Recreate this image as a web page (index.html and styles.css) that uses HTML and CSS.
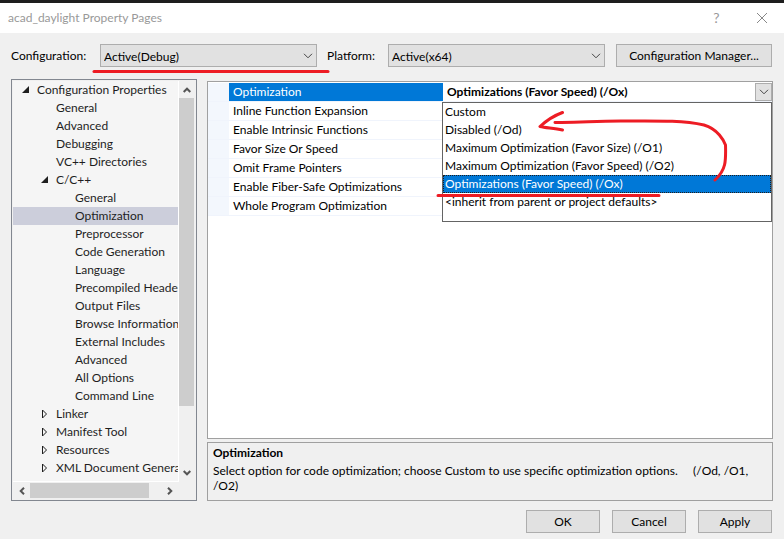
FILE: index.html
```html
<!DOCTYPE html>
<html lang="en">
<head>
<meta charset="utf-8">
<title>acad_daylight Property Pages</title>
<link rel="stylesheet" href="styles.css">
</head>
<body>
<header class="titlebar">
  <h1 class="title">acad_daylight Property Pages</h1>
  <button class="caption-button" type="button" aria-label="Help">?</button>
  <button class="caption-button" type="button" aria-label="Close"><svg width="10" height="10" viewBox="0 0 10 10"><path d="M0 0L10 10M10 0L0 10"/></svg></button>
</header>

<div class="config-row">
  <label class="config-label" for="configuration">Configuration:</label>
  <div class="combo">
    <select id="configuration"><option>Active(Debug)</option></select>
    <svg class="chevron" width="10" height="6" viewBox="0 0 10 6"><path d="M1 .8L5 4.8L9 .8"/></svg>
    <svg class="mark mark-config" width="240" height="6" viewBox="0 0 240 6"><path d="M3 3.500H237"/></svg>
  </div>
  <label class="platform-label" for="platform">Platform:</label>
  <div class="combo">
    <select id="platform"><option>Active(x64)</option></select>
    <svg class="chevron" width="10" height="6" viewBox="0 0 10 6"><path d="M1 .8L5 4.8L9 .8"/></svg>
  </div>
  <button class="button manager" type="button">Configuration Manager...</button>
</div>

<main class="main">
  <nav class="tree" aria-label="Property pages">
    <div class="tree-view">
      <ul>
        <li><a class="open" href="#"><svg width="8" height="8" viewBox="0 0 8 8"><path class="solid" d="M7 0V7H0Z"/></svg>Configuration Properties</a>
          <ul>
            <li><a href="#">General</a></li>
            <li><a href="#">Advanced</a></li>
            <li><a href="#">Debugging</a></li>
            <li><a href="#">VC++ Directories</a></li>
            <li><a class="open" href="#"><svg width="8" height="8" viewBox="0 0 8 8"><path class="solid" d="M7 0V7H0Z"/></svg>C/C++</a>
              <ul>
                <li><a href="#">General</a></li>
                <li><a class="selected" href="#" aria-current="page">Optimization</a></li>
                <li><a href="#">Preprocessor</a></li>
                <li><a href="#">Code Generation</a></li>
                <li><a href="#">Language</a></li>
                <li><a href="#">Precompiled Headers</a></li>
                <li><a href="#">Output Files</a></li>
                <li><a href="#">Browse Information</a></li>
                <li><a href="#">External Includes</a></li>
                <li><a href="#">Advanced</a></li>
                <li><a href="#">All Options</a></li>
                <li><a href="#">Command Line</a></li>
              </ul>
            </li>
            <li><a class="closed" href="#"><svg width="8" height="10" viewBox="0 0 8 10"><path class="hollow" d="M1.5 1V9L5.5 5Z"/></svg>Linker</a></li>
            <li><a class="closed" href="#"><svg width="8" height="10" viewBox="0 0 8 10"><path class="hollow" d="M1.5 1V9L5.5 5Z"/></svg>Manifest Tool</a></li>
            <li><a class="closed" href="#"><svg width="8" height="10" viewBox="0 0 8 10"><path class="hollow" d="M1.5 1V9L5.5 5Z"/></svg>Resources</a></li>
            <li><a class="closed" href="#"><svg width="8" height="10" viewBox="0 0 8 10"><path class="hollow" d="M1.5 1V9L5.5 5Z"/></svg>XML Document Generator</a></li>
          </ul>
        </li>
      </ul>
    </div>
    <div class="scroll-v">
      <svg class="arrow" width="8" height="6" viewBox="0 0 8 6"><path d="M.7 5L4 1.7L7.300 5"/></svg>
      <div class="track"><div class="thumb"></div></div>
      <svg class="arrow" width="8" height="6" viewBox="0 0 8 6"><path d="M.7 1L4 4.300L7.300 1"/></svg>
    </div>
    <div class="scroll-h">
      <svg class="arrow" width="6" height="8" viewBox="0 0 6 8"><path d="M5 .7L1.700 4L5 7.300"/></svg>
      <div class="track"><div class="thumb"></div></div>
      <svg class="arrow" width="6" height="8" viewBox="0 0 6 8"><path d="M1 .7L4.300 4L1 7.300"/></svg>
    </div>
  </nav>

  <div class="content">
    <section class="grid">
      <table>
        <tbody>
          <tr class="active"><td class="gutter"></td><th scope="row"><label for="optimization">Optimization</label></th>
            <td class="value">
              <div class="editor">
                <select id="optimization"><option>Optimizations (Favor Speed) (/Ox)</option></select>
                <span class="drop"><svg width="10" height="6" viewBox="0 0 10 6"><path d="M1 .8L5 4.8L9 .8"/></svg></span>
                <div class="menu">
                  <ul role="listbox" aria-label="Optimization">
                    <li role="option">Custom</li>
                    <li role="option">Disabled (/Od)</li>
                    <li role="option">Maximum Optimization (Favor Size) (/O1)</li>
                    <li role="option">Maximum Optimization (Favor Speed) (/O2)</li>
                    <li role="option" class="chosen" aria-selected="true">Optimizations (Favor Speed) (/Ox)</li>
                    <li role="option">&lt;inherit from parent or project defaults&gt;</li>
                  </ul>
                  <svg class="mark mark-menu" width="300" height="110" viewBox="0 0 300 110"><path d="M7 98.500H228M131.500 15.500C122 19 115 24 109 29.500C115 31 123 31 131.500 33M124 25.500C150 26 160 24 190 24C223 24 250 23 273 28C287 32 293 44 294.500 48C295 64 295 73 284 83"/></svg>
                </div>
              </div>
            </td></tr>
          <tr><td class="gutter"></td><th scope="row">Inline Function Expansion</th><td></td></tr>
          <tr><td class="gutter"></td><th scope="row">Enable Intrinsic Functions</th><td></td></tr>
          <tr><td class="gutter"></td><th scope="row">Favor Size Or Speed</th><td></td></tr>
          <tr><td class="gutter"></td><th scope="row">Omit Frame Pointers</th><td></td></tr>
          <tr><td class="gutter"></td><th scope="row">Enable Fiber-Safe Optimizations</th><td></td></tr>
          <tr><td class="gutter"></td><th scope="row">Whole Program Optimization</th><td></td></tr>
        </tbody>
      </table>
    </section>
    <section class="description">
      <h2>Optimization</h2>
      <p>Select option for code optimization; choose Custom to use specific optimization options. &nbsp;&nbsp;&nbsp; (/Od, /O1, /O2)</p>
    </section>
  </div>
</main>

<footer class="actions">
  <button class="button" type="button">OK</button>
  <button class="button" type="button">Cancel</button>
  <button class="button" type="button">Apply</button>
</footer>
</body>
</html>
```
FILE: styles.css
```css
* { box-sizing: border-box; }

body {
  margin: 0;
  min-height: 100vh;
  display: flex;
  flex-direction: column;
  background: #f0f0f0;
  border-top: 3px solid #1e1e1e;
  color: #000;
  font-family: Lato, "Noto Sans", sans-serif;
  font-size: 12px;
  line-height: 18px;
}

button, select { font: inherit; color: inherit; }
ul { list-style: none; margin: 0; padding: 0; }
svg { display: block; fill: none; stroke: #444; }

.titlebar {
  display: flex;
  align-items: center;
  height: 30px;
  padding-left: 8px;
  background: #fff;
  color: #999;
}
.title { flex: 1; margin: 0; font-size: 12px; font-weight: 400; }
.caption-button {
  display: flex;
  align-items: center;
  justify-content: center;
  width: 45px;
  height: 28px;
  padding: 0;
  border: 0;
  background: none;
  font-size: 14px;
}
.caption-button svg { stroke: #888; }

.config-row {
  display: flex;
  align-items: center;
  padding: 11px 12px 0 11px;
}
.config-label { width: 89px; }
.platform-label { width: 61px; }
.combo + .platform-label { margin-left: 10px; }
.combo { position: relative; flex: 1; }
.combo select {
  display: block;
  appearance: none;
  width: 100%;
  height: 23px;
  padding: 2px 3px 0;
  border: 1px solid #adadad;
  border-radius: 0;
  background: #e1e1e1;
}
.chevron { position: absolute; right: 4px; top: 9px; }
.button {
  width: 74px;
  height: 23px;
  padding: 0;
  border: 1px solid #adadad;
  background: #e1e1e1;
}
.manager { width: 156px; margin-left: 11px; }

.main {
  flex: 1;
  display: flex;
  gap: 10px;
  padding: 12px 11px 0 11px;
}

.tree {
  display: grid;
  grid-template-columns: minmax(0, 1fr) 16px;
  grid-template-rows: 1fr 17px;
  width: 186px;
  padding: 1px;
  border: 1px solid #828790;
}
.tree-view {
  overflow: hidden;
  background: #f5f5f5;
  border-right: 1px solid #fff;
  border-bottom: 1px solid #fff;
  color: #1e1e1e;
}
.tree a {
  display: flex;
  align-items: center;
  height: 18px;
  padding-left: 24px;
  color: inherit;
  text-decoration: none;
  white-space: nowrap;
}
.tree li li a { padding-left: 43px; }
.tree li li li a { padding-left: 62px; }
.tree a.open, .tree a.closed { padding-left: 9px; }
.tree li li a.open, .tree li li a.closed { padding-left: 28px; }
.tree a svg { flex: none; margin-right: 7px; }
.tree .selected { background: #cccedb; }
.solid { fill: #1e1e1e; stroke: none; }
.hollow { stroke: #1e1e1e; }

.scroll-v, .scroll-h { display: flex; align-items: center; }
.scroll-v { flex-direction: column; padding: 6px 1px 6px 0; }
.scroll-h { padding: 0 6px; }
.scroll-v .track { flex: 1; width: 15px; margin: 5px 0; }
.scroll-h .track { flex: 1; height: 15px; margin: 0 5px; }
.scroll-v .thumb { height: 84%; background: #cdcdcd; }
.scroll-h .thumb { width: 90%; height: 100%; background: #cdcdcd; }
.arrow { stroke: #555; stroke-width: 2; }

.content {
  flex: 1;
  display: flex;
  flex-direction: column;
  gap: 3px;
  padding-top: 2px;
}
.grid {
  flex: 1;
  padding-top: 1px;
  border: 1px solid #a0a0a0;
  background: #fff;
}
.grid table { width: 100%; border-spacing: 0; table-layout: fixed; }
.grid th, .grid td {
  height: 19px;
  padding: 0;
  border-bottom: 1px solid #f0f4fc;
  font-weight: 400;
  line-height: 18px;
  text-align: left;
}
.grid .gutter { width: 21px; background: #f3f7fd; }
.grid th { width: 214px; padding-left: 4px; }
.grid .active th { background: #0078d7; color: #fff; }
.editor { position: relative; }
.editor select {
  display: block;
  appearance: none;
  width: 100%;
  height: 18px;
  padding: 0 4px;
  border: 0;
  background: #fff;
  font-weight: 700;
}
.drop {
  position: absolute;
  top: 0;
  right: 0;
  display: flex;
  align-items: center;
  justify-content: center;
  width: 17px;
  height: 18px;
  border: 1px solid #adadad;
  background: #e1e1e1;
  pointer-events: none;
}
.menu {
  position: absolute;
  z-index: 1;
  top: 19px;
  left: -1px;
  right: 0;
  height: 120px;
  border: 1px solid #646464;
  background: #fff;
}
.menu li { padding-left: 2px; white-space: nowrap; }
.menu .chosen {
  background: #0078d7;
  color: #fff;
  outline: 1px dotted #1e1e1e;
  outline-offset: -1px;
}
.mark { position: absolute; stroke: #ed1c24; stroke-width: 3; stroke-linecap: round; stroke-linejoin: round; pointer-events: none; }
.mark-config { left: -9px; top: 24px; z-index: 1; }
.mark-menu { left: -12px; top: -6px; }

.description {
  height: 59px;
  padding: 2px 5px;
  border: 1px solid #a0a0a0;
  line-height: 15px;
}
.description h2 { margin: 0 0 2px; font-size: 12px; line-height: 16px; }
.description p { margin: 0; }

.actions {
  display: flex;
  justify-content: flex-end;
  gap: 12px;
  padding: 9px 12px 6px;
}
```
